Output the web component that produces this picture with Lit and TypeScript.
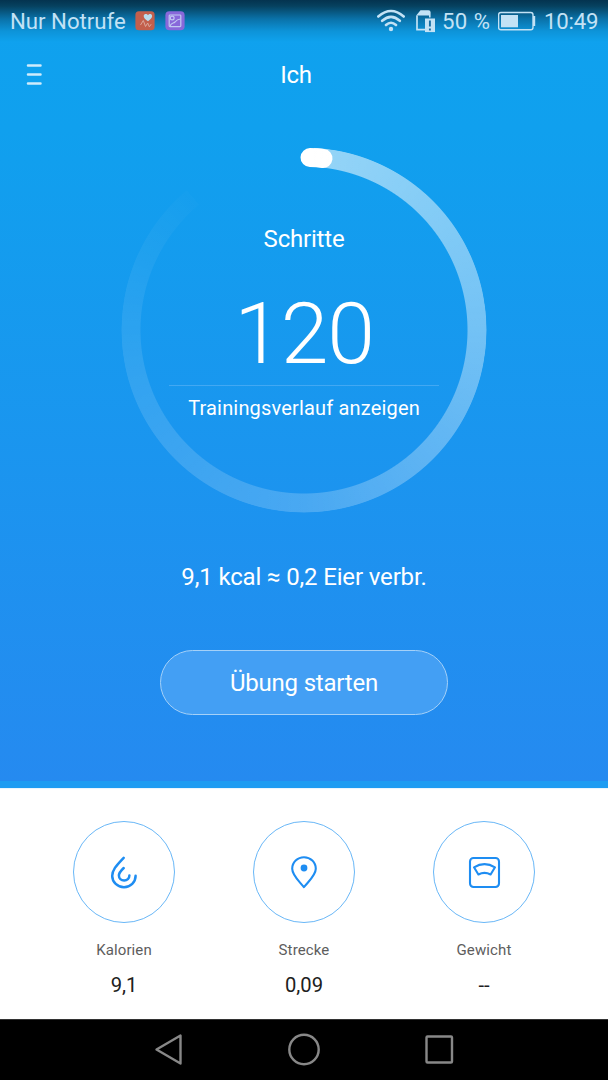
import { LitElement, html, css, svg } from "lit";
import { customElement } from "lit/decorators.js";

const icons = {
  drop: svg`<svg width="34" height="38" viewBox="107 853 34 38" fill="none" stroke="#1e8df2" stroke-width="2.500" stroke-linecap="round" stroke-linejoin="round"><path d="M123.700 857.800C117 865 112.200 869.500 112.200 876A11.800 11.300 0 0 0 124 887.200A11.800 11.300 0 0 0 135.600 875.800"/><path d="M123.700 868C120.500 871 118.900 873 118.900 875.500A5.200 5 0 0 0 124.100 880.500A5.200 5 0 0 0 129.400 875.400"/></svg>`,
  pin: svg`<svg width="34" height="38" viewBox="287 853 34 38" fill="none" stroke="#1e8df2" stroke-width="2.100"><path stroke-linejoin="round" d="M303.900 887.200C299.500 881.500 292.200 875.500 292.200 868.800A11.800 11.600 0 0 1 315.800 868.800C315.800 875.500 308.300 881.500 303.900 887.200Z"/><circle cx="304" cy="868" r="3.400" fill="#1e8df2" stroke="none"/></svg>`,
  scale: svg`<svg width="34" height="38" viewBox="467 853 34 38" fill="none" stroke="#1e8df2" stroke-width="2.100"><rect x="470" y="858" width="29" height="29" rx="3.500"/><path stroke-linejoin="round" d="M474 867.300Q484.500 861 495 867.300L490.600 874.500Q484.500 871.300 478.400 874.500Z"/></svg>`,
  health: svg`<svg class="app" width="20" height="20"><rect x=".4" y=".2" width="19.200" height="19" rx="3.500" fill="#c35f4c"/><path d="M13 10.200C10.500 8.300 8.500 6.800 8.700 4.900C8.900 2.600 12 2.300 13 4.200C14 2.300 17 2.700 17.100 4.900C17.200 6.800 15 8.700 13 10.200Z" fill="#b9dced"/><path d="M5.500 14L8.300 9.500L10.500 15.500L12.700 12L14.300 15.800L16.200 13.200" stroke="#dba79b" fill="none"/></svg>`,
  gallery: svg`<svg width="20" height="20" fill="none" stroke="#c0c9f2" stroke-width="1.200"><rect x=".4" y=".2" width="19.200" height="19" rx="4" fill="#8868da" stroke="none"/><rect x="4.200" y="4" width="11.600" height="11.600" rx=".8"/><circle cx="7.200" cy="7" r="1.900"/><path d="M5 15C6.500 11 8.500 12.800 10 11C11.500 9 12.500 8.200 15.500 8"/></svg>`,
  wifi: svg`<svg width="28" height="24" viewBox="376 9 28 24" fill="none" stroke="#c3e2f5" stroke-width="2.600" stroke-linecap="round"><path d="M377.300 16.500Q390 5.500 402.700 16.500M381.200 20.800Q390 13 398.800 20.800M385 25Q390 20.500 395 25"/><circle cx="390" cy="29" r="2.200" fill="#c3e2f5" stroke="none"/></svg>`,
  sim: svg`<svg width="20" height="24" viewBox="415 8 20 24"><path d="M416 14.500V28.600H424" stroke="#c3e2f5" stroke-width="1.700" fill="none"/><path d="M415.200 14.500L419.500 9.200H427.500Q429.600 9.200 429.600 11.300V16.500H428V14.500Z" fill="#c3e2f5"/><rect x="424" y="17.500" width="10" height="13.600" fill="#c3e2f5"/><path d="M428.900 19.500V25.600M428.900 27.400V29.400" stroke="#176ea3" stroke-width="1.900"/></svg>`,
  battery: svg`<svg width="38" height="20" viewBox="498 11 38 20" fill="none"><rect x="498.600" y="12.500" width="34.400" height="17.200" rx="2.200" stroke="#c3e2f5" stroke-width="1.400"/><rect x="501" y="15" width="17" height="12.300" fill="#c3e2f5"/><path d="M533 16H535.200V26H533Z" fill="#c3e2f5"/></svg>`,
};

@customElement("app-root")
export class AppRoot extends LitElement {
  static styles = css`
    :host { display: flex; flex-direction: column; width: 608px; height: 1080px; overflow: hidden; font-family: Roboto, "Liberation Sans", sans-serif; color: #fff; white-space: nowrap; }
    * { box-sizing: border-box; }
    svg { display: block; flex: none; }
    .hero { height: 788px; display: flex; flex-direction: column; align-items: center; border-bottom: 7px solid #1e9cf2; background: linear-gradient(#0fa2ee 0, #10a0ee 130px, #258af0 781px); }
    .status { align-self: stretch; height: 42px; padding: 0 10px; display: flex; align-items: center; justify-content: space-between; background: linear-gradient(#04334f 0, #06415f 6px, #0a72a9 19px, #0d93d8 31px, #0fa2ee 42px); font-size: 22.2px; color: #c3e2f5; }
    .group { display: flex; align-items: center; height: 42px; }
    .carrier { width: 125px; }
    .gap { margin-left: 10px; }
    .wifi { margin-right: 11px; }
    .pct { width: 56px; margin-left: 6px; letter-spacing: .4px; }
    .clock { width: 54px; margin-left: 8px; text-align: right; letter-spacing: -.2px; }
    .bar { align-self: stretch; height: 66px; display: grid; grid-template-columns: 1fr auto 1fr; align-items: center; padding: 0 42px 0 26px; }
    .title { font-size: 24px; letter-spacing: -.2px; }
    .ring { width: 366px; height: 366px; margin-top: 39px; display: grid; }
    .ring > * { grid-area: 1 / 1; }
    .track { border-radius: 50%; background: conic-gradient(transparent 3deg, rgba(255,255,255,.56) 3deg, rgba(255,255,255,.4) 90deg, rgba(255,255,255,.2) 180deg, rgba(255,255,255,.11) 260deg, rgba(255,255,255,.015) 320deg, transparent 320deg); -webkit-mask: radial-gradient(circle, transparent 163px, #000 164px, #000 182px, transparent 183px); mask: radial-gradient(circle, transparent 163px, #000 164px, #000 182px, transparent 183px); }
    .center { display: flex; flex-direction: column; align-items: center; padding-top: 75px; }
    .label { font-size: 24px; line-height: 34px; letter-spacing: -.2px; }
    .steps { font-size: 86px; line-height: 100px; font-weight: 300; margin-top: 28px; height: 110px; letter-spacing: -1.2px; }
    .history { width: 270px; border-top: 1px solid #42a8f3; font-size: 20px; letter-spacing: .17px; line-height: 30px; padding-top: 7px; margin-top: -9px; text-align: center; }
    .energy { font-size: 24px; line-height: 32px; margin-top: 48px; letter-spacing: -.15px; }
    .start { width: 288px; height: 65px; margin: 57px 0 0; border: 1px solid #a5d1f8; border-radius: 33px; background: #439ff4; color: inherit; font: 24px Roboto, sans-serif; letter-spacing: -.2px; padding: 1px 0 0; }
    .stats { height: 231px; background: #fff; display: grid; grid-template-columns: repeat(3, 180px); justify-content: center; padding-top: 32px; border-top: 1px solid #e8f5fe; }
    .stat { display: flex; flex-direction: column; align-items: center; }
    .disc { width: 102px; height: 102px; border: 1px solid #69b7f7; border-radius: 50%; display: grid; place-items: center; }
    .name { font-size: 15px; letter-spacing: .12px; line-height: 20px; margin-top: 17px; color: #5d5d5d; }
    .value { font-size: 20.2px; line-height: 26px; margin-top: 12px; color: #202020; }
    .nav { height: 61px; background: #000; border-top: 1px solid #333; display: flex; justify-content: center; }
  `;

  private stat(icon: unknown, name: string, value: string) {
    return html`<div class="stat"><div class="disc">${icon}</div><div class="name"><span>${name}</span></div><div class="value"><span>${value}</span></div></div>`;
  }

  render() {
    return html`
      <div class="hero">
        <div class="status">
          <div class="group"><span class="carrier">Nur Notrufe</span>${icons.health}<div class="gap">${icons.gallery}</div></div>
          <div class="group"><div class="wifi">${icons.wifi}</div>${icons.sim}<span class="pct">50 %</span>${icons.battery}<span class="clock">10:49</span></div>
        </div>
        <div class="bar"><svg width="16" height="22"><path d="M2 1.500H14.500M2 10.500H14.500M2 19.500H14.500" stroke="#d0ecfc" stroke-width="2.500" stroke-linecap="round"/></svg><span class="title">Ich</span></div>
        <div class="ring">
          <div class="track"></div>
          <svg width="366" height="366"><path d="M189 10.600Q196 10.800 202 11.500" stroke="#fff" stroke-width="19" stroke-linecap="round" fill="none"/></svg>
          <div class="center"><span class="label">Schritte</span><span class="steps">120</span><div class="history"><span>Trainingsverlauf anzeigen</span></div></div>
        </div>
        <div class="energy"><span>9,1 kcal ≈ 0,2 Eier verbr.</span></div>
        <button class="start"><span>Übung starten</span></button>
      </div>
      <div class="stats">${this.stat(icons.drop, "Kalorien", "9,1")}${this.stat(icons.pin, "Strecke", "0,09")}${this.stat(icons.scale, "Gewicht", "--")}</div>
      <div class="nav"><svg width="608" height="60" fill="none" stroke="#888" stroke-width="2.400" stroke-linejoin="round"><path d="M156.500 29.500L180.500 15.500V43.500Z"/><circle cx="304" cy="29.500" r="14.700"/><rect x="426.500" y="16.500" width="25.500" height="26" rx="1"/></svg></div>
    `;
  }
}
